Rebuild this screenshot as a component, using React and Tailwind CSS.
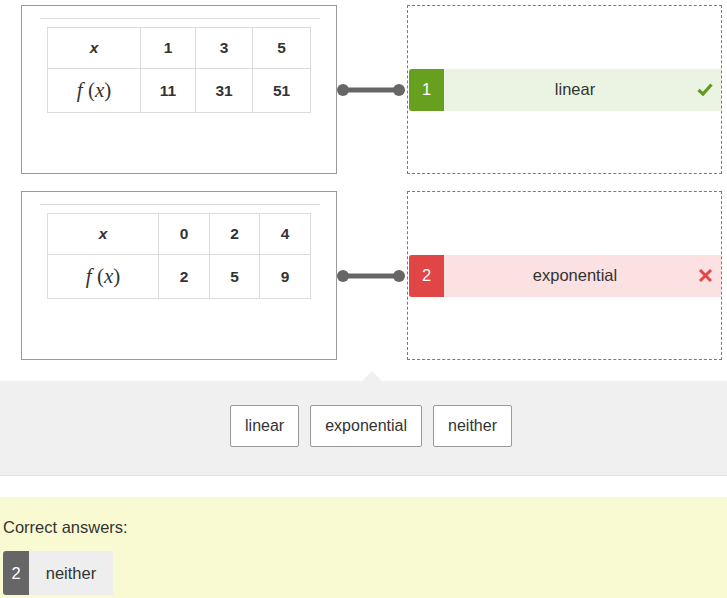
import React from 'react';

const tables = [
  { xs: ['1', '3', '5'], fs: ['11', '31', '51'], widths: ['93px', '55px', '57px', '58px'] },
  { xs: ['0', '2', '4'], fs: ['2', '5', '9'], widths: ['111px', '51px', '50px', '51px'] },
];

const answers = [
  { n: '1', label: 'linear', ok: true },
  { n: '2', label: 'exponential', ok: false },
];

const Check = () => (
  <svg width="16" height="13" viewBox="0 0 16 13">
    <path d="M1.5 7 L6 11 L14.5 1.5" fill="none" stroke="#5f9b1f" strokeWidth="3.2" strokeLinejoin="miter" />
  </svg>
);

const Cross = () => (
  <svg width="15" height="15" viewBox="0 0 15 15">
    <path d="M2 2 L13 13 M13 2 L2 13" fill="none" stroke="#e04848" strokeWidth="3" />
  </svg>
);

const FTable = ({ t }) => (
  <table className="border-collapse text-[15.5px] font-bold text-[#333] ml-[25px] mt-[8px]">
    <tbody>
      <tr className="h-[41px]">
        <td style={{ width: t.widths[0] }} className="border border-[#dcdcdc] text-center italic">x</td>
        {t.xs.map((v, i) => (
          <td key={i} style={{ width: t.widths[i + 1] }} className="border border-[#dcdcdc] text-center">{v}</td>
        ))}
      </tr>
      <tr className="h-[44px]">
        <td className="border border-[#dcdcdc] text-center font-normal font-['Liberation_Serif',serif] text-[21px]">
          <i>f</i>&nbsp;(<i>x</i>)
        </td>
        {t.fs.map((v, i) => (
          <td key={i} className="border border-[#dcdcdc] text-center">{v}</td>
        ))}
      </tr>
    </tbody>
  </table>
);

export default function App() {
  return (
    <div className="w-[727px] h-[598px] overflow-hidden bg-white text-[#333] font-['Liberation_Sans',Arial,sans-serif]">
      <div className="pt-[5px] pl-[21px] flex flex-col gap-[17px]">
        {tables.map((t, i) => {
          const a = answers[i];
          return (
            <div key={i} className="flex items-center">
              <div className="w-[316px] h-[169px] border border-[#999] pt-[12px]">
                <div className="ml-[18px] mr-[16px] border-t border-[#dcdcdc]" />
                <FTable t={t} />
              </div>
              <svg width="70" height="14" viewBox="0 0 70 14">
                <line x1="6" y1="7" x2="62" y2="7" stroke="#666" strokeWidth="5" />
                <circle cx="6" cy="7" r="6" fill="#666" />
                <circle cx="62" cy="7" r="6" fill="#666" />
              </svg>
              <div className="w-[315px] h-[169px] border border-dashed border-[#7a7a7a] flex items-center">
                <div className={`relative ml-[1px] flex-1 h-[42px] flex items-stretch ${a.ok ? 'bg-[#ebf4e3]' : 'bg-[#fbe1e1]'}`}>
                  <div className={`w-[35px] flex items-center justify-center text-white text-[16.5px] rounded-l-[3px] ${a.ok ? 'bg-[#66a01e]' : 'bg-[#e04646]'}`}>
                    {a.n}
                  </div>
                  <div className="flex-1 flex items-center justify-center pr-[15px] text-[16.5px]">{a.label}</div>
                  <div className="absolute right-[8px] top-0 h-full flex items-center">
                    {a.ok ? <Check /> : <Cross />}
                  </div>
                </div>
              </div>
            </div>
          );
        })}
      </div>

      <div className="relative mt-[21px] h-[95px] bg-[#f0f0f0] border-b border-[#e0e0e0] pt-[24px] pl-[15px] flex justify-center items-start gap-[11px]">
        <div className="absolute left-[362px] top-[-10px] w-0 h-0 border-l-[10px] border-r-[10px] border-b-[10px] border-l-transparent border-r-transparent border-b-[#f0f0f0]" />
        {['linear', 'exponential', 'neither'].map((b) => (
          <div key={b} className="h-[42px] px-[14px] flex items-center bg-white border border-[#999] rounded-[2px] text-[16px]">
            {b}
          </div>
        ))}
      </div>

      <div className="mt-[21px] h-[120px] bg-[#fafad2] pl-[3px] pt-[21px]">
        <div className="text-[16.5px] leading-[19px]">Correct answers:</div>
        <div className="mt-[14px] flex h-[44px]">
          <div className="w-[26px] bg-[#666] text-white text-[16.5px] flex items-center justify-center rounded-l-[3px]">2</div>
          <div className="w-[84px] bg-[#eeeeee] text-[16.5px] flex items-center justify-center">neither</div>
        </div>
      </div>
    </div>
  );
}
